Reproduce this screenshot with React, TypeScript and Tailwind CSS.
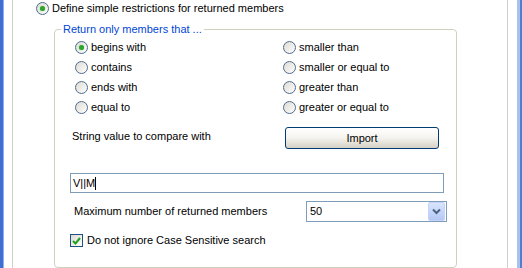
import React from 'react';

const font = { fontFamily: '"Liberation Sans", Arial, sans-serif' };

const Radio: React.FC<{ checked?: boolean; label: string }> = ({ checked, label }) => (
  <label className="flex items-center gap-[3px] h-[20px] text-[11px] text-black">
    <span className="relative w-[13px] h-[13px] rounded-full border border-[#4c6c8f] bg-gradient-to-br from-[#dcdad2] to-white flex items-center justify-center shrink-0">
      {checked && <span className="w-[5px] h-[5px] rounded-full bg-[#2fa52f] shadow-[0_0_1px_#5fd05f]" />}
    </span>
    <span>{label}</span>
  </label>
);

export default function App() {
  return (
    <div className="w-[522px] h-[268px] overflow-hidden bg-white flex" style={font}>
      <div className="w-[4px] h-full bg-[#3f6fd0] border-r border-[#8fb0ec]" />
      <div className="flex-1 flex">
        <div className="ml-[8px] w-[496px] h-full border-l border-r border-[#d4d0c8] flex flex-col">
          <div className="h-[16px] pl-[23px] flex items-center">
            <Radio checked label="Define simple restrictions for returned members" />
          </div>

          <div className="relative ml-[41px] w-[403px] mt-[13px] h-[280px] border border-[#d0d0bf] rounded-[4px]">
            <span className="absolute left-[6px] top-[-8px] px-[2px] bg-white text-[11px] leading-[14px] text-[#0046d5]">
              Return only members that ...
            </span>

            <div className="grid grid-cols-[208px_1fr] pl-[20px] pt-[7px]">
              <Radio checked label="begins with" />
              <Radio label="smaller than" />
              <Radio label="contains" />
              <Radio label="smaller or equal to" />
              <Radio label="ends with" />
              <Radio label="greater than" />
              <Radio label="equal to" />
              <Radio label="greater or equal to" />
            </div>

            <div className="flex items-center pl-[17px] mt-[10px] h-[22px]">
              <span className="w-[213px] text-[11px] text-black mb-[3px]">String value to compare with</span>
              <button className="w-[154px] h-[22px] rounded-[3px] border border-[#003c74] bg-gradient-to-b from-white via-[#f4f3ee] to-[#d6d0c5] text-[11px] text-black">
                Import
              </button>
            </div>

            <div className="ml-[15px] mt-[24px] w-[374px] h-[20px] border border-[#7f9db9] flex items-center px-[2px] text-[11px] text-black">
              <span>V||M</span>
              <span className="w-px h-[13px] bg-black" />
            </div>

            <div className="flex items-center pl-[19px] mt-[8px] h-[21px]">
              <span className="w-[232px] text-[11px] text-black">Maximum number of returned members</span>
              <div className="w-[141px] h-[21px] border border-[#7f9db9] flex items-center">
                <span className="flex-1 pl-[3px] text-[11px] text-black">50</span>
                <span className="w-[17px] h-[19px] mr-px rounded-[2px] bg-gradient-to-b from-[#d9e5fd] to-[#b3c8f5] border border-[#c3d3fd] flex items-center justify-center">
                  <svg width="9" height="7" viewBox="0 0 9 7">
                    <path d="M1 1.5 L4.5 5 L8 1.5" fill="none" stroke="#4d6185" strokeWidth="2" />
                  </svg>
                </span>
              </div>
            </div>

            <div className="flex items-center gap-[4px] pl-[15px] mt-[12px] h-[13px]">
              <span className="w-[13px] h-[13px] border border-[#1c5180] bg-gradient-to-br from-[#dcdad2] to-white flex items-center justify-center">
                <svg width="9" height="8" viewBox="0 0 9 8">
                  <path d="M1 4 L3.5 6.5 L8 1" fill="none" stroke="#21a121" strokeWidth="2" />
                </svg>
              </span>
              <span className="text-[11px] text-black">Do not ignore Case Sensitive search</span>
            </div>
          </div>
        </div>
        <div className="flex-1" />
      </div>
      <div className="w-[5px] h-full bg-[#a8c2ee] border-r-2 border-[#4f7ed4]" />
    </div>
  );
}
